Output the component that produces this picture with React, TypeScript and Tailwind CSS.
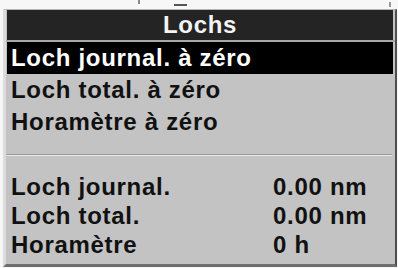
const menuItems = ['Loch journal. à zéro', 'Loch total. à zéro', 'Horamètre à zéro']

const readings = [
  { label: 'Loch journal.', value: '0.00 nm' },
  { label: 'Loch total.', value: '0.00 nm' },
  { label: 'Horamètre', value: '0 h' },
]

export default function App() {
  return (
    <div
      className="relative w-[398px] h-[268px] overflow-hidden bg-[#f7f7f7] font-bold tracking-[0.7px]"
      style={{ fontFamily: '"Liberation Sans", Arial, sans-serif' }}
    >
      {/* bits of the screen above peeking through */}
      <div className="absolute left-[138px] top-0 w-[2px] h-[4px] bg-[#8a8a8a]" />
      <div className="absolute left-[174px] top-[4px] w-[13px] h-[2px] bg-[#555]" />
      <div className="absolute left-[389px] top-[2px] w-[2px] h-[5px] bg-[#999]" />

      <div className="ml-[3px] mt-[9px] w-[394px] h-[258px] flex flex-col bg-[#c3c3c3] border-t border-t-[#b5b5b5] border-l-[3px] border-l-[#dcdcdc] border-r-[2px] border-r-[#4e4e4e] border-b-[3px] border-b-[#6f6f6f]">
        <div className="ml-px mr-[2px] h-[30px] bg-[#242424] text-[#f4f4f4] text-[24px] leading-[30px] text-center">
          Lochs
        </div>
        <div className="h-[2px] bg-[#a8a8a8]" />

        <ul className="ml-px mr-[2px]">
          {menuItems.map((item, i) => (
            <li
              key={item}
              className={
                i === 0
                  ? 'h-[32px] pl-[4px] bg-black text-white text-[24px] leading-[32px]'
                  : 'h-[32px] pl-[4px] text-[#111] text-[24px] leading-[32px]'
              }
            >
              {item}
            </li>
          ))}
        </ul>

        <div className="mt-[16px] ml-px mr-[3px] h-[1px] bg-[#999]" />
        <div className="ml-px mr-[3px] h-[1px] bg-[#e9e9e9]" />

        <div className="mt-[16px] ml-px mr-[2px]">
          {readings.map((r) => (
            <div
              key={r.label}
              className="grid grid-cols-[262px_1fr] h-[29px] pl-[4px] text-[#111] text-[24px] leading-[29px]"
            >
              <span>{r.label}</span>
              <span>{r.value}</span>
            </div>
          ))}
        </div>
      </div>
    </div>
  )
}
